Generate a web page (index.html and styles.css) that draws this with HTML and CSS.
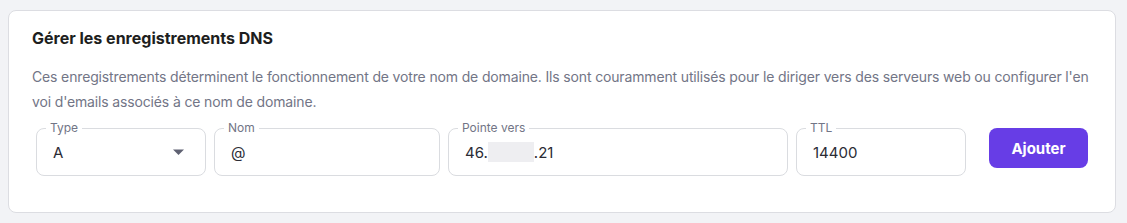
FILE: index.html
```html
<!DOCTYPE html>
<html lang="fr">
  <head>
    <meta charset="UTF-8" />
    <meta name="viewport" content="width=device-width, initial-scale=1.0" />
    <title>Enregistrements DNS</title>

    <!-- CSS -->
    <link rel="stylesheet" href="styles.css">
  </head>
  <body>
    <div class="card">
      <h2 class="card-title">Gérer les enregistrements DNS</h2>
      <p class="card-text">
        Ces enregistrements déterminent le fonctionnement de votre nom de domaine. Ils sont couramment utilisés pour le diriger vers des serveurs web ou configurer l'en<br>voi d'emails associés à ce nom de domaine.
      </p>

      <form class="record-form">
        <div class="field">
          <span class="field-label">Type</span>
          <div class="field-value">A</div>
          <svg class="select-arrow" width="11" height="6" viewBox="0 0 11 6">
            <path d="M0 0.5 H11 L5.5 6 Z" fill="#5f6172" />
          </svg>
        </div>

        <div class="field">
          <span class="field-label">Nom</span>
          <div class="field-value">@</div>
        </div>

        <div class="field">
          <span class="field-label">Pointe vers</span>
          <div class="field-value">46.<span class="masked"></span>.21</div>
        </div>

        <div class="field">
          <span class="field-label">TTL</span>
          <div class="field-value">14400</div>
        </div>

        <button type="button" class="btn-add">Ajouter</button>
      </form>
    </div>
  </body>
</html>
```

FILE: styles.css
```css
body {
  margin: 0;
  padding: 10px 11px 11px 8px;
  background-color: #f2f3f6;
  font-family: "Inter", "Liberation Sans", sans-serif;
}

.card {
  background-color: #fff;
  border: 1px solid #dcdde2;
  border-radius: 8px;
  padding: 15px 23px 22px;
}

.card-title {
  margin: 0;
  font-size: 16px;
  line-height: 24px;
  font-weight: 700;
  color: #1d1e20;
}

.card-text {
  margin: 14px 0 0;
  font-size: 14px;
  line-height: 25px;
  letter-spacing: -0.15px;
  white-space: nowrap;
  color: #727586;
}

.record-form {
  display: grid;
  grid-template-columns: 170px 226px 340px 170px auto;
  column-gap: 8px;
  align-items: start;
  margin: 14px 4px 14px;
}

.field {
  position: relative;
  box-sizing: border-box;
  height: 48px;
  border: 1px solid #dadce0;
  border-radius: 8px;
  display: flex;
  align-items: center;
  padding: 0 16px;
}

.field-label {
  position: absolute;
  top: -9px;
  left: 9px;
  padding: 0 4px;
  background-color: #fff;
  font-size: 12px;
  line-height: 16px;
  color: #727586;
}

.field-value {
  flex: 1;
  font-size: 15px;
  color: #2b2c35;
  display: flex;
  align-items: center;
}

.masked {
  display: inline-block;
  width: 46px;
  height: 20px;
  background-color: #eeeef1;
}

.select-arrow {
  margin-right: 5px;
}

.btn-add {
  margin-left: 15px;
  width: 99px;
  height: 40px;
  border: none;
  border-radius: 8px;
  background-color: #673de6;
  color: #fff;
  font-family: inherit;
  font-size: 15px;
  font-weight: 700;
  cursor: pointer;
}
```
